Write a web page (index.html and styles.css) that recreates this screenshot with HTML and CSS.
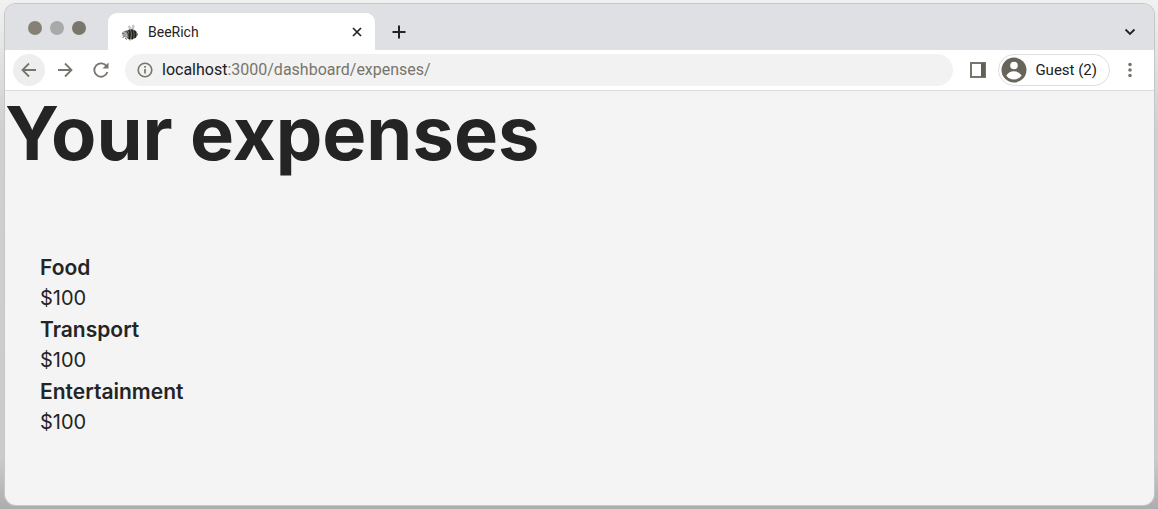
FILE: index.html
```html
<!DOCTYPE html>
<html lang="en">
<head>
<meta charset="utf-8">
<title>BeeRich</title>
<link rel="stylesheet" href="styles.css">
</head>
<body>
<div class="window">
  <header class="tab-strip">
    <div class="lights"><span class="light light-close"></span><span class="light light-min"></span><span class="light light-max"></span></div>
    <div class="tab">
      <svg class="bee" viewBox="0 0 18 18" aria-hidden="true">
        <path d="M8.500 7.500L7 3.500Q8 1.500 9.500 3.500L11 7Z M10.500 7L11 2.500Q13.500 0 13.500 3.500L12.500 7.500Z" fill="#c4c4c6"/>
        <path d="M5 8Q8 5.500 12 6.500Q15.500 7.500 17 11.500Q14.500 16.500 9.500 16.500Q5.500 16 4 12Z" fill="#6b685c"/>
        <path d="M8 7Q10 11 8 16M10.500 6.500Q13 11 11 16.200M13.300 7.500Q15.300 10.500 13.800 15" fill="none" stroke="#20201e" stroke-width="1.500"/>
        <circle cx="4.500" cy="11" r="3.300" fill="#a3a4a7"/>
        <path d="M1 10l2 1M1.500 14.500l2-1M4 15l2 1.500M8 16l1 1.500" stroke="#66655e" stroke-width="1"/>
        <path d="M4.500 8Q7.500 9 7.500 13" fill="none" stroke="#3d3c38" stroke-width="1.300"/>
      </svg>
      <span class="tab-title">BeeRich</span>
      <button class="plain tab-close" aria-label="Close tab"><svg width="12" height="12" viewBox="0 0 12 12"><path d="M2 2l8 8M10 2l-8 8" stroke="#222" stroke-width="1.700"/></svg></button>
    </div>
    <button class="plain new-tab" aria-label="New tab"><svg width="14" height="14" viewBox="0 0 14 14"><path d="M7 .500v13M.500 7h13" stroke="#222" stroke-width="2"/></svg></button>
    <button class="plain tab-search" aria-label="Search tabs"><svg width="12" height="8" viewBox="0 0 12 8"><path d="M1.500 1.500L6 6l4.500-4.500" fill="none" stroke="#222" stroke-width="1.800"/></svg></button>
  </header>
  <nav class="toolbar">
    <button class="plain nav-button nav-back" aria-label="Back"><svg width="16" height="16" viewBox="0 0 16 16"><path d="M15 8H2M8 1.500L1.500 8 8 14.500"/></svg></button>
    <button class="plain nav-button" aria-label="Forward"><svg width="16" height="16" viewBox="0 0 16 16"><path d="M1 8h13M8 1.500L14.500 8 8 14.500"/></svg></button>
    <button class="plain nav-button" aria-label="Reload"><svg width="18" height="18" viewBox="0 0 18 18"><path d="M14.700 5.500A6.700 6.700 0 1 0 15.400 11"/><path d="M16.500 1.500v6h-6z" class="solid"/></svg></button>
    <div class="address">
      <svg width="16" height="16" viewBox="0 0 16 16" aria-hidden="true"><circle cx="8" cy="8" r="6.800" fill="none" stroke="#78756a" stroke-width="1.600"/><path d="M8 7v4.500M8 4v1.700" stroke="#78756a" stroke-width="1.700"/></svg>
      <span class="url"><span class="host">localhost</span>:3000/dashboard/expenses/</span>
    </div>
    <button class="plain panel" aria-label="Side panel"><svg width="16" height="16" viewBox="0 0 16 16"><path d="M1 1h14v14H1z" fill="none" stroke="#78756a" stroke-width="2"/><path d="M11 1h4v14h-4z" fill="#625f55"/></svg></button>
    <button class="profile">
      <svg width="26" height="26" viewBox="0 0 26 26" aria-hidden="true"><circle cx="13" cy="13" r="12.500" fill="#67645a"/><circle cx="13" cy="8.500" r="3.800" fill="#fff"/><path d="M5.300 18.500Q8 14.200 13 14.200T20.700 18.500Q18 22.500 13 22.500T5.300 18.500Z" fill="#fff"/></svg>
      <span>Guest (2)</span>
    </button>
    <button class="plain more" aria-label="Menu"><svg width="4" height="16" viewBox="0 0 4 16"><g fill="#78756a"><circle cx="2" cy="2.500" r="1.800"/><circle cx="2" cy="8" r="1.800"/><circle cx="2" cy="13.500" r="1.800"/></g></svg></button>
  </nav>
  <main class="page">
    <h1>Your expenses</h1>
    <dl class="expenses">
      <dt>Food</dt><dd>$100</dd>
      <dt>Transport</dt><dd>$100</dd>
      <dt>Entertainment</dt><dd>$100</dd>
    </dl>
  </main>
</div>
</body>
</html>
```
FILE: styles.css
```css
* { box-sizing: border-box; }
body {
  margin: 0;
  min-height: 100vh;
  padding: 4px 4px 4px 5px;
  display: flex;
  background: linear-gradient(#f1f1f1, #d0d0d0 25%, #cbcbcb 90%, #adadad);
  font-family: Roboto, "Liberation Sans", sans-serif;
  color: #242424;
}
svg { display: block; flex: none; }
.window {
  flex: 1;
  min-width: 0;
  display: flex;
  flex-direction: column;
  overflow: hidden;
  border-radius: 11px;
  background: #f4f4f4;
  box-shadow: 0 0 0 1px #c6c6c6;
}
.plain {
  display: grid;
  place-items: center;
  padding: 0;
  border: 0;
  background: none;
}
.tab-strip {
  display: flex;
  align-items: center;
  height: 46px;
  padding: 9px 18px 0 23px;
  background: #dee0e4;
}
.lights { display: flex; gap: 8px; margin: 0 22px 8px 0; }
.light { width: 14px; height: 14px; border-radius: 50%; }
.light-close { background: #858174; }
.light-min { background: #a9a9aa; }
.light-max { background: #79766a; }
.tab {
  display: flex;
  align-items: center;
  align-self: stretch;
  width: 267px;
  padding: 0 12px 0 13px;
  border-radius: 9px 9px 0 0;
  background: #fff;
}
.bee { width: 18px; height: 18px; margin-right: 9px; }
.tab-title { flex: 1; font-size: 14px; line-height: 20px; }
.new-tab { margin-left: 17px; }
.tab-search { margin-left: auto; }
.toolbar {
  display: flex;
  align-items: center;
  height: 41px;
  padding: 0 22px 0 8px;
  border-bottom: 1px solid #dcdce0;
  background: #fff;
}
.nav-button { width: 32px; height: 32px; margin-right: 4px; border-radius: 50%; }
.nav-button path { fill: none; stroke: #78756a; stroke-width: 1.8; }
.nav-button .solid { fill: #78756a; stroke: none; }
.nav-back { background: #eee; }
.address {
  flex: 1;
  display: flex;
  align-items: center;
  gap: 9px;
  height: 32px;
  margin-left: 4px;
  padding: 0 12px;
  border-radius: 16px;
  background: #f2f2f2;
}
.url { font-size: 16px; line-height: 24px; color: #78756a; }
.host { color: #202020; }
.panel { margin-left: 17px; }
.profile {
  display: flex;
  align-items: center;
  gap: 8px;
  height: 32px;
  margin: 0 18px 0 12px;
  padding: 0 12px 0 2px;
  border: 1px solid #dedee0;
  border-radius: 16px;
  background: #fff;
  color: #202020;
  font: 15px/24px Roboto, "Liberation Sans", sans-serif;
}
.page { flex: 1; font-family: Inter, "Liberation Sans", sans-serif; }
h1 { margin: 0; font-size: 74px; line-height: 84px; font-weight: 700; }
.expenses { margin: 0; padding: 77px 35px 48px; font-size: 20px; line-height: 31px; }
dt { font-size: 21px; font-weight: 600; }
dd { margin: 0; }
```
